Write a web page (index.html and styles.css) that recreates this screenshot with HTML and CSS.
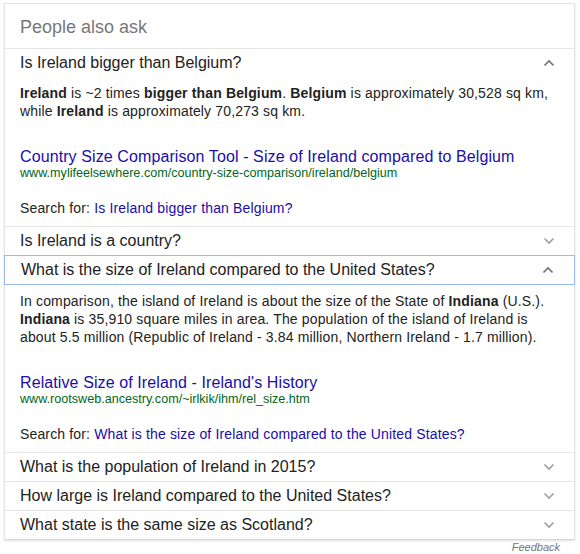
FILE: index.html
```html
<!DOCTYPE html>
<html lang="en">
<head>
    <meta charset="UTF-8">
    <meta name="viewport" content="width=device-width, initial-scale=1.0">
    <title>People also ask</title>
    <link rel="stylesheet" href="styles.css">
</head>
<body>

    <div class="paa">
        <div class="paa-head">People also ask</div>

        <div class="q">
            <div class="q-row">
                <span>Is Ireland bigger than Belgium?</span>
                <svg class="chev up" width="12" height="8" viewBox="0 0 12 8"><polyline points="1.5,6.5 6,2 10.5,6.5"/></svg>
            </div>
            <div class="answer">
                <p><b>Ireland</b> is ~2 times <b>bigger than Belgium</b>. <b>Belgium</b> is approximately 30,528 sq km, while <b>Ireland</b> is approximately 70,273 sq km.</p>
                <a class="title" href="#">Country Size Comparison Tool - Size of Ireland compared to Belgium</a>
                <div class="cite">www.mylifeelsewhere.com/country-size-comparison/ireland/belgium</div>
                <div class="search-for">Search for: <a href="#">Is Ireland bigger than Belgium?</a></div>
            </div>
        </div>

        <div class="q">
            <div class="q-row">
                <span>Is Ireland is a country?</span>
                <svg class="chev" width="12" height="8" viewBox="0 0 12 8"><polyline points="1.5,1.5 6,6 10.5,1.5"/></svg>
            </div>
        </div>

        <div class="q">
            <div class="q-row focus">
                <span>What is the size of Ireland compared to the United States?</span>
                <svg class="chev up" width="12" height="8" viewBox="0 0 12 8"><polyline points="1.5,6.5 6,2 10.5,6.5"/></svg>
            </div>
            <div class="answer">
                <p>In comparison, the island of Ireland is about the size of the State of <b>Indiana</b> (U.S.). <b>Indiana</b> is 35,910 square miles in area. The population of the island of Ireland is about 5.5 million (Republic of Ireland - 3.84 million, Northern Ireland - 1.7 million).</p>
                <a class="title" href="#">Relative Size of Ireland - Ireland's History</a>
                <div class="cite">www.rootsweb.ancestry.com/~irlkik/ihm/rel_size.htm</div>
                <div class="search-for">Search for: <a href="#">What is the size of Ireland compared to the United States?</a></div>
            </div>
        </div>

        <div class="q">
            <div class="q-row">
                <span>What is the population of Ireland in 2015?</span>
                <svg class="chev" width="12" height="8" viewBox="0 0 12 8"><polyline points="1.5,1.5 6,6 10.5,1.5"/></svg>
            </div>
        </div>

        <div class="q">
            <div class="q-row">
                <span>How large is Ireland compared to the United States?</span>
                <svg class="chev" width="12" height="8" viewBox="0 0 12 8"><polyline points="1.5,1.5 6,6 10.5,1.5"/></svg>
            </div>
        </div>

        <div class="q">
            <div class="q-row">
                <span>What state is the same size as Scotland?</span>
                <svg class="chev" width="12" height="8" viewBox="0 0 12 8"><polyline points="1.5,1.5 6,6 10.5,1.5"/></svg>
            </div>
        </div>
    </div>

    <div class="feedback">Feedback</div>

</body>
</html>
```

FILE: styles.css
```css
body {
    margin: 0;
    padding: 3px 0 0 4px;
    font-family: "Liberation Sans", Arial, sans-serif;
    color: #222;
    background: #fff;
}
.paa {
    width: 569px;
    border: 1px solid #e4e4e4;
    border-bottom-color: #d6d6d6;
    box-shadow: 0 1px 2px rgba(0, 0, 0, 0.12);
}
.paa-head {
    height: 41px;
    padding: 3px 0 0 15px;
    line-height: 41px;
    font-size: 18px;
    color: #777;
}
.q {
    border-top: 1px solid #e6e6e6;
}
.q-row {
    display: flex;
    align-items: center;
    justify-content: space-between;
    height: 28px;
    padding: 0 19px 0 15px;
    font-size: 16px;
    color: #222;
}
.q-row.focus {
    margin: -1px -1px 0;
    padding: 0 20px 0 16px;
    border: 1px solid #9ab8f3;
}
.chev polyline {
    fill: none;
    stroke: #9e9e9e;
    stroke-width: 1.6;
}
.chev.up polyline {
    stroke: #707070;
}
.answer {
    padding: 7px 15px 9px;
    font-size: 14px;
}
.answer p {
    margin: 0;
    line-height: 18px;
    letter-spacing: 0.15px;
}
.answer b {
    font-weight: bold;
}
.title {
    display: block;
    margin-top: 28px;
    font-size: 16px;
    line-height: 18px;
    letter-spacing: 0.1px;
    color: #1a0dab;
    text-decoration: none;
}
.cite {
    font-size: 12.6px;
    line-height: 14px;
    color: #006621;
}
.search-for {
    margin-top: 19px;
    line-height: 18px;
    letter-spacing: 0.15px;
    color: #222;
}
.search-for a {
    color: #1a0dab;
    text-decoration: none;
}
.feedback {
    width: 556px;
    margin-top: 1px;
    text-align: right;
    font-size: 11px;
    font-style: italic;
    color: #777;
}
```
